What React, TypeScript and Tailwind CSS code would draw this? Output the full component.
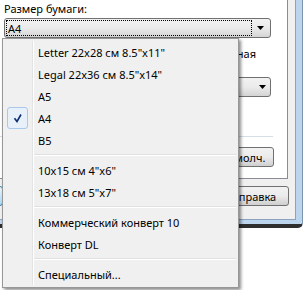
import React from "react";

const items: (string | null)[] = [
  'Letter 22x28 см 8.5"x11"',
  'Legal 22x36 см 8.5"x14"',
  "A5",
  "A4",
  "B5",
  null,
  '10x15 см 4"x6"',
  '13x18 см 5"x7"',
  null,
  "Коммерческий конверт 10",
  "Конверт DL",
  null,
  "Специальный...",
];

function Arrow() {
  return (
    <svg width="7" height="4" viewBox="0 0 7 4">
      <path d="M0 0h7L3.5 4z" fill="#000" />
    </svg>
  );
}

function Button({ label, className }: { label: string; className: string }) {
  return (
    <div
      className={`flex items-center justify-center rounded-[3px] border border-[#707070] bg-gradient-to-b from-[#f2f2f2] via-[#ebebeb] to-[#cfcfcf] ${className}`}
    >
      {label}
    </div>
  );
}

export default function App() {
  return (
    <div className="relative w-[305px] h-[290px] overflow-hidden bg-white font-['Noto_Sans',sans-serif] text-[11px] leading-none text-black">
      {/* dialog window behind the menu */}
      <div className="w-[305px] h-[228px] pr-[2px]">
        <div className="h-full rounded-br-[5px] border-r border-b-[4px] border-r-[#7d96b0] border-b-[#2e2e2e]">
          <div className="h-full rounded-br-[4px] border-r-[6px] border-b-[4px] border-[#bcd4ec] bg-[#bcd4ec]">
            <div className="h-full border-r border-b border-[#8aa4c0] bg-[#f0f0f0] pr-[7px]">
              <div className="h-[179px] border-r border-b border-[#898c95] bg-white">
                <div className="pl-[4px] pt-[3px]">Размер бумаги:</div>
                <div className="ml-[4px] mt-[4px] flex h-[20px] w-[267px] items-center rounded-[3px] border border-[#707070] bg-gradient-to-b from-[#f2f2f2] via-[#ebebeb] to-[#d4d4d4] p-px">
                  <div className="flex h-full w-[246px] items-center border border-dotted border-black pl-px">
                    A4
                  </div>
                  <div className="flex flex-1 justify-center">
                    <Arrow />
                  </div>
                </div>
                <div className="mt-[10px] flex w-[256px] justify-end">Книжная</div>
                <div className="ml-[140px] mt-[18px] flex h-[20px] w-[131px] items-center justify-end rounded-[3px] border border-[#707070] bg-gradient-to-b from-[#f2f2f2] via-[#ebebeb] to-[#d4d4d4] pr-[4px]">
                  <Arrow />
                </div>
                <div className="mt-[39px] h-px w-[273px] bg-[#d5dfe5]" />
                <Button label="По умолч." className="ml-[203px] mt-[10px] h-[20px] w-[71px]" />
              </div>
              <div className="mt-[7px] flex justify-between">
                <div className="ml-[-60px] h-[20px] w-[63px] rounded-[3px] border border-[#3c7fb1] bg-gradient-to-b from-[#eaf6fd] to-[#a7d9f5]" />
                <Button label="Справка" className="mr-[-1px] h-[20px] w-[70px]" />
              </div>
            </div>
          </div>
        </div>
      </div>

      {/* dropped down menu */}
      <div className="absolute left-[2px] top-[38px] w-[237px] border border-[#979797] bg-[#f0f0f0] p-[2px] shadow-[2px_2px_3px_rgba(0,0,0,0.45)]">
        <div className="relative">
          <div className="absolute bottom-0 left-[27px] top-0 w-[2px] border-l border-[#e2e3e3] bg-white" />
          {items.map((item, i) =>
            item === null ? (
              <div key={i} className="relative flex h-[8px] items-center pl-[29px]">
                <div className="h-[2px] w-full border-t border-[#e0e0e0] bg-white" />
              </div>
            ) : (
              <div key={i} className="relative flex h-[22px] items-center">
                <div className="flex w-[33px] justify-start pl-[2px]">
                  {item === "A4" && (
                    <div className="flex h-[22px] w-[21px] items-center justify-center rounded-[3px] border border-[#a8c8ec] bg-[#e8f0fa]">
                      <svg width="9" height="10" viewBox="0 0 9 10">
                        <path d="M1.5 5.2L4 8.5L8 1.5" fill="none" stroke="#0c2f74" strokeWidth="1.6" />
                      </svg>
                    </div>
                  )}
                </div>
                <span>{item}</span>
              </div>
            )
          )}
        </div>
      </div>
    </div>
  );
}
